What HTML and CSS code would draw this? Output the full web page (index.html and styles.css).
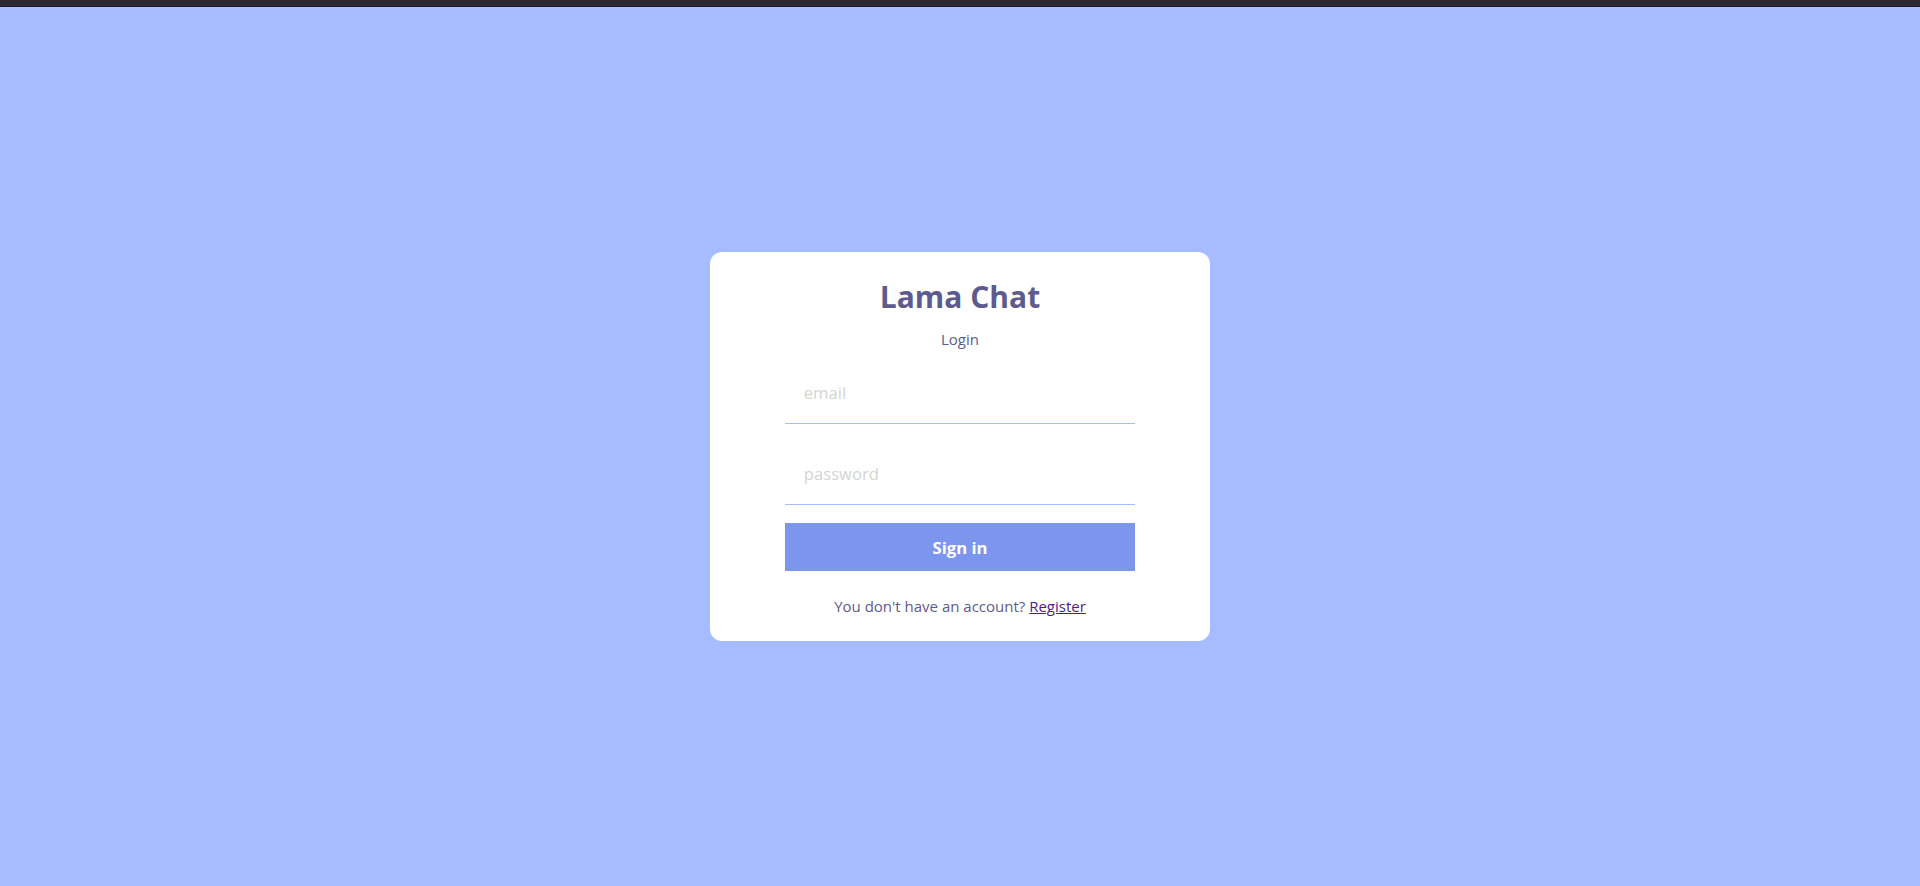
FILE: index.html
```html
<!DOCTYPE html>
<html lang="en">
<head>
<meta charset="utf-8">
<title>Lama Chat</title>
<link rel="stylesheet" href="styles.css">
</head>
<body>
<div class="chrome"></div>
<div class="formContainer">
  <div class="formWrapper">
    <span class="logo">Lama Chat</span>
    <span class="title">Login</span>
    <form class="form">
      <input class="field" type="email" placeholder="email">
      <input class="field" type="password" placeholder="password">
      <button class="submit" type="button">Sign in</button>
    </form>
    <p class="note">You don't have an account? <a class="link" href="#register">Register</a></p>
  </div>
</div>
</body>
</html>
```
FILE: styles.css
```css
html, body {
  margin: 0;
  padding: 0;
}
body {
  font-family: "Open Sans", "Noto Sans", sans-serif;
  background: #a7bcff;
}
.chrome {
  height: 6px;
  background: #2b2a33;
  border-bottom: 1px solid #1c1b22;
}
.formContainer {
  height: 879px;
  display: flex;
  align-items: center;
  justify-content: center;
  background: #a7bcff;
}
.formWrapper {
  background: #ffffff;
  padding: 25px 75px;
  border-radius: 12px;
  display: flex;
  flex-direction: column;
  align-items: center;
  gap: 12.5px;
}
.logo {
  color: #5d5b8d;
  font-weight: 700;
  font-size: 30px;
  line-height: 40px;
}
.title {
  color: #5d5b8d;
  font-size: 15px;
  line-height: 20px;
}
.form {
  display: flex;
  flex-direction: column;
  gap: 18.75px;
  margin: 0;
}
.field {
  box-sizing: border-box;
  width: 350px;
  padding: 18.75px;
  border: none;
  border-bottom: 1px solid #a7bcff;
  font-family: "Open Sans", "Noto Sans", sans-serif;
  font-size: 16.67px;
  line-height: 23.5px;
  height: 62px;
  outline: none;
  color: #333;
  background: #fff;
}
.field::placeholder {
  color: #d4d4d4;
  opacity: 1;
}
.submit {
  background: #7b96ec;
  color: #ffffff;
  padding: 12.5px;
  height: 48px;
  font-family: "Open Sans", "Noto Sans", sans-serif;
  font-weight: 700;
  font-size: 16.67px;
  line-height: 23px;
  border: none;
  cursor: pointer;
}
.note {
  color: #5d5b8d;
  font-size: 15px;
  line-height: 20px;
  margin: 12.5px 0 0;
}
.link {
  color: #551a8b;
  text-decoration: underline;
}
```
